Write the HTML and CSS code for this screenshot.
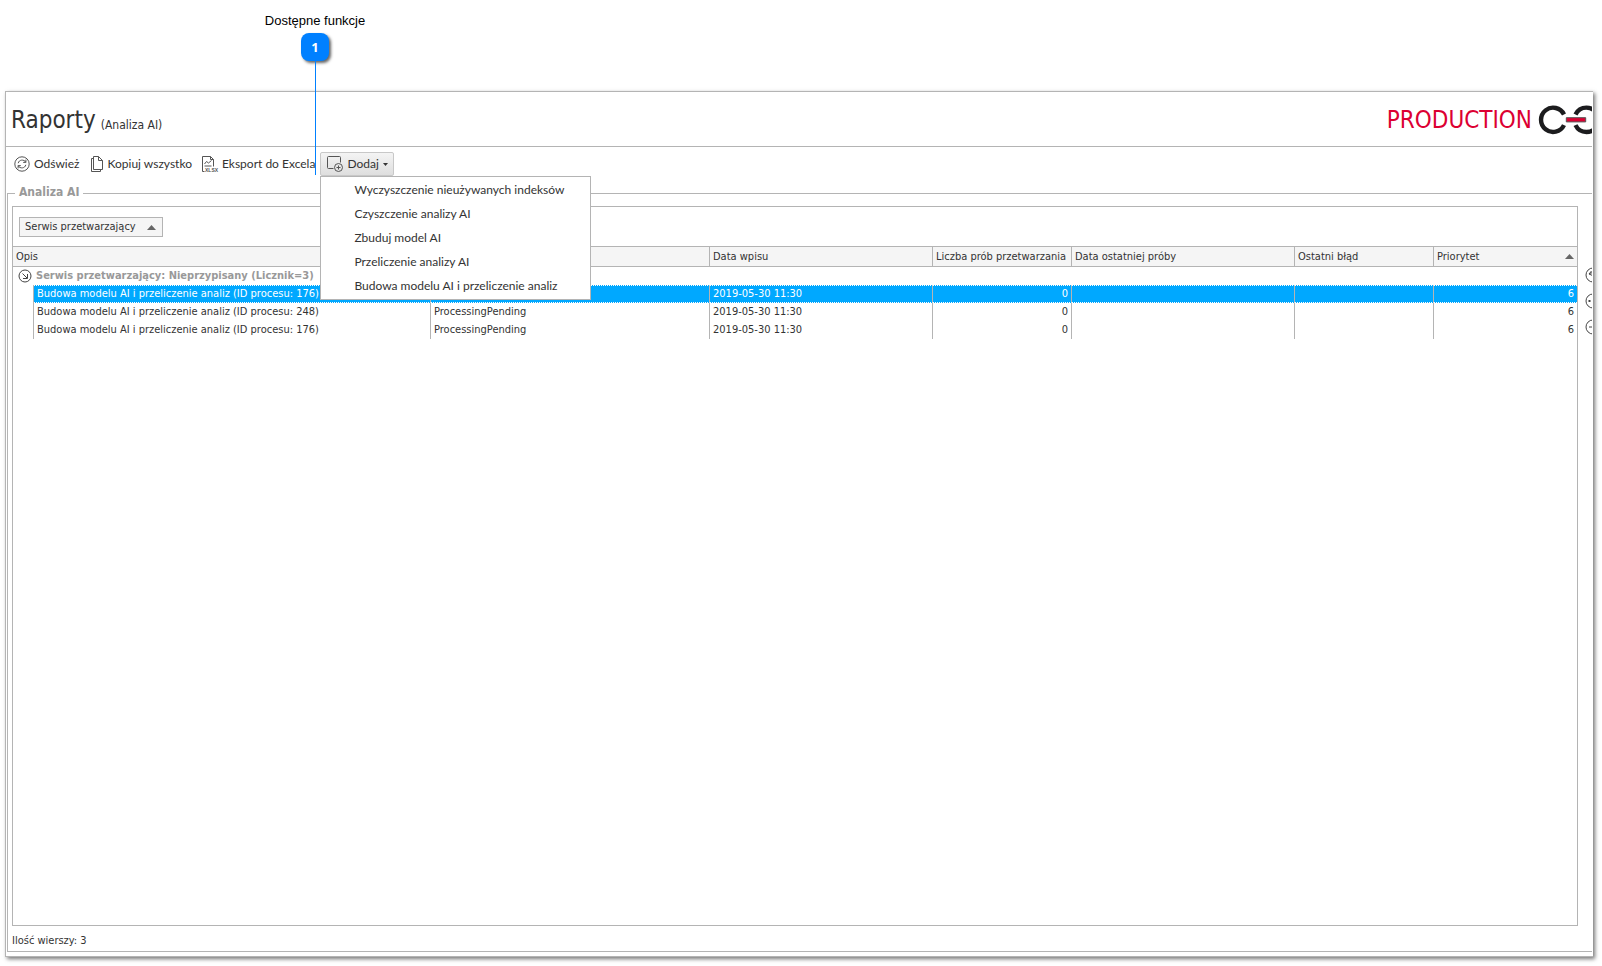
FILE: index.html
```
<!DOCTYPE html>
<html lang="pl">
<head>
<meta charset="utf-8">
<title>Raporty (Analiza AI)</title>
<link rel="stylesheet" href="styles.css">
</head>
<body>
<div class="callout">
  <span class="callout-label">Dostępne funkcje</span>
  <span class="callout-badge">1</span>
</div>
<main class="window">
  <header class="titlebar">
    <h1 class="title">Raporty</h1>
    <span class="subtitle">(Analiza AI)</span>
    <span class="env">PRODUCTION</span>
    <svg class="logo" viewBox="0 0 54 30" aria-hidden="true">
      <g fill="none" stroke="#1c1c1e" stroke-width="4.4">
        <path d="M26 9.500A12.100 12.100 0 1 0 26 20.100"/>
        <path d="M37.500 9.500A12.100 12.100 0 0 1 59.300 9.500M37.500 20.100A12.100 12.100 0 0 0 59.300 20.100"/>
      </g>
      <path d="M28.300 12.700H47.700V16.900H28.300z" fill="#dc0032"/>
    </svg>
  </header>
  <nav class="toolbar">
    <button class="tool" type="button">
      <svg class="icon" viewBox="0 0 16 16"><circle cx="8" cy="8" r="7.2"/><path d="M4.2 7.2C4.8 3.6 10 3 11.8 6.2M11.9 3.6V6.4H9.2M11.8 8.8C11.2 12.4 6 13 4.2 9.8M4.1 12.4V9.6H6.8"/></svg>
      Odśwież
    </button>
    <button class="tool" type="button">
      <svg class="icon icon-narrow" viewBox="0 0 14 16"><path d="M3.500.5H8.500L12.500 4.500V13.500H3.500zM8.500.5V4.500H12.500M3.500 2.500H1.500V15.500H10.500V13.500"/></svg>
      Kopiuj wszystko
    </button>
    <button class="tool" type="button">
      <svg class="icon" viewBox="0 0 16 16"><path d="M2.500 15.500H.5V.5H8.500L11.500 3.500V10.500M8.500.5V3.500H11.500M2.500 8L4.500 5.500L6.500 7L9.500 4.500M2.500 10H9.500"/><text class="icon-text" x="3" y="16">XLSX</text></svg>
      Eksport do Excela
    </button>
    <div class="dropdown">
      <button class="tool tool-open" type="button" aria-haspopup="true" aria-expanded="true">
        <svg class="icon" viewBox="0 0 16 16"><path d="M6.500 12.500H1.500Q.5 12.500.5 11.500V1.500Q.5.5 1.500.5H12.500Q13.500.5 13.500 1.500V6.500"/><circle cx="11.500" cy="11.500" r="4"/><path d="M9.500 11.500H13.500M11.500 9.500V13.500"/></svg>
        Dodaj
        <svg class="caret" viewBox="0 0 5 3"><path d="M0 0H5L2.500 3z"/></svg>
      </button>
      <div class="menu" role="menu">
        <button type="button" role="menuitem">Wyczyszczenie nieużywanych indeksów</button>
        <button type="button" role="menuitem">Czyszczenie analizy AI</button>
        <button type="button" role="menuitem">Zbuduj model AI</button>
        <button type="button" role="menuitem">Przeliczenie analizy AI</button>
        <button type="button" role="menuitem">Budowa modelu AI i przeliczenie analiz</button>
      </div>
    </div>
  </nav>
  <section class="group">
    <h2 class="legend">Analiza AI</h2>
    <div class="content">
      <div class="grid">
        <div class="groupby">
          <button class="chip" type="button">Serwis przetwarzający <svg class="sort" viewBox="0 0 9 5"><path d="M0 5H9L4.500 0z"/></svg></button>
        </div>
        <table>
          <colgroup><col class="c-indent"><col><col class="c-status"><col class="c-date"><col class="c-tries"><col class="c-last"><col class="c-error"><col class="c-prio"></colgroup>
          <thead>
            <tr><th colspan="2">Opis</th><th></th><th>Data wpisu</th><th>Liczba prób przetwarzania</th><th>Data ostatniej próby</th><th>Ostatni błąd</th><th><span class="sorted">Priorytet <svg class="sort" viewBox="0 0 9 5"><path d="M0 5H9L4.500 0z"/></svg></span></th></tr>
          </thead>
          <tbody>
            <tr class="group-row"><td colspan="8"><div class="group-cell"><svg class="ring" viewBox="0 0 14 14"><circle cx="7" cy="7" r="6"/><path d="M4.500 4.500L9 9M9.500 5V9.500H5"/></svg>Serwis przetwarzający: Nieprzypisany (Licznik=3)</div></td></tr>
            <tr class="selected"><td></td><td>Budowa modelu AI i przeliczenie analiz (ID procesu: 176)</td><td></td><td>2019-05-30 11:30</td><td class="num">0</td><td></td><td></td><td class="num">6</td></tr>
            <tr><td></td><td>Budowa modelu AI i przeliczenie analiz (ID procesu: 248)</td><td>ProcessingPending</td><td>2019-05-30 11:30</td><td class="num">0</td><td></td><td></td><td class="num">6</td></tr>
            <tr><td></td><td>Budowa modelu AI i przeliczenie analiz (ID procesu: 176)</td><td>ProcessingPending</td><td>2019-05-30 11:30</td><td class="num">0</td><td></td><td></td><td class="num">6</td></tr>
          </tbody>
        </table>
      </div>
      <div class="side">
        <button type="button" aria-label="Cofnij"><svg viewBox="0 0 16 16"><circle cx="8" cy="8" r="7"/><path d="M6.500 4L4 7L7.500 8.500M4 7Q8 4 11 8"/></svg></button>
        <button type="button" aria-label="Opcje"><svg viewBox="0 0 16 16"><circle cx="8" cy="8" r="7"/><path d="M3.500 8H5.500M7 8H9M10.500 8H12.500" stroke-width="2"/></svg></button>
        <button type="button" aria-label="Zwiń"><svg viewBox="0 0 16 16"><circle cx="8" cy="8" r="7"/><path d="M4 8H12"/></svg></button>
      </div>
    </div>
    <p class="count">Ilość wierszy: 3</p>
  </section>
</main>
</body>
</html>
```
FILE: styles.css
```
* { box-sizing: border-box; }
body {
  margin: 0;
  min-height: 100vh;
  padding: 0 9px 9px 5px;
  display: flex;
  flex-direction: column;
  background: #fff;
  color: #333;
  font: 11px/18px "DejaVu Sans Condensed", "DejaVu Sans", sans-serif;
}
button { font: inherit; color: inherit; background: none; border: 0; margin: 0; padding: 0; white-space: nowrap; }
svg { display: block; flex: none; fill: none; stroke: #555; }

.callout {
  width: 100px;
  margin-left: 260px;
  height: 91px;
  padding-top: 13px;
  display: flex;
  flex-direction: column;
  align-items: center;
  gap: 4px;
  color: #000;
  font: 13px/16px "Liberation Sans", Arial, sans-serif;
  white-space: nowrap;
}
.callout-badge {
  position: relative;
  width: 28px;
  height: 28px;
  border-radius: 8px;
  background: #0080ff;
  box-shadow: 2px 2px 3px #666;
  color: #fff;
  font: bold 13px/28px "Open Sans", sans-serif;
  text-align: center;
}
.callout-badge::after {
  content: "";
  position: absolute;
  z-index: 3;
  left: 14px;
  top: 28px;
  width: 1px;
  height: 114px;
  background: #0080ff;
}

.window {
  flex: 1;
  display: flex;
  flex-direction: column;
  padding-right: 1px;
  border: 1px solid #b4b4b4;
  border-right: 0;
  box-shadow: 2px 2px 4px 0 #777;
}
.titlebar {
  height: 55px;
  padding: 2px 0 0 5px;
  display: flex;
  align-items: center;
  overflow: hidden;
  border-bottom: 1px solid #b4b4b4;
}
.title { margin: 0; font: 24px/32px "DejaVu Sans Condensed", sans-serif; }
.subtitle { margin-left: 5px; padding-top: 9px; font-size: 12px; }
.env { margin-left: auto; color: #dc0032; font-size: 24px; }
.logo { width: 54px; height: 30px; margin-left: 6px; }

.toolbar { display: flex; align-items: flex-start; gap: 10px; height: 36px; padding: 5px 0 0 8px; font: 12px/18px Lato, sans-serif; }
.tool { display: flex; align-items: center; gap: 4px; height: 24px; }
.icon { width: 16px; height: 16px; overflow: visible; }
.icon-narrow { width: 14px; }
.icon-text { font: bold 5px "Liberation Sans", sans-serif; fill: #555; stroke: none; }
.caret { width: 5px; height: 3px; fill: #333; stroke: none; }
.dropdown { position: relative; margin-left: -5px; }
.tool-open { padding: 0 5px 0 6px; border: 1px solid #c8c8c8; border-radius: 2px; background: linear-gradient(#f4f4f4, #dedede); }
.menu {
  position: absolute;
  z-index: 2;
  top: 24px;
  left: 0;
  width: 271px;
  padding: 1px 0;
  display: flex;
  flex-direction: column;
  background: #fff;
  border: 1px solid #b4b4b4;
}
.menu button { height: 24px; padding-left: 33px; text-align: left; }

.group {
  flex: 1;
  display: flex;
  flex-direction: column;
  min-width: 0;
  margin: 10px 0 4px 1px;
  padding-left: 4px;
  border: 1px solid #b4b4b4;
  border-right: 0;
}
.legend { align-self: flex-start; margin: -11px 0 5px 3px; padding: 0 4px 0 4px; background: #fff; color: #999; font-weight: bold; line-height: 18px; font-size: 12px; }
.content { flex: 1; display: flex; }
.grid { flex: 1; min-width: 0; border: 1px solid #b4b4b4; }
.groupby { padding: 10px 6px 9px; }
.chip { display: flex; align-items: center; justify-content: space-between; width: 144px; height: 20px; padding: 0 6px 0 5px; border: 1px solid #b4b4b4; background: #f5f5f5; }
.sort { width: 9px; height: 5px; fill: #666; stroke: none; }

table { width: 100%; table-layout: fixed; border-collapse: separate; border-spacing: 0; }
.c-indent { width: 21px; }
.c-status { width: 279px; }
.c-date, .c-last { width: 223px; }
.c-tries, .c-error { width: 139px; }
.c-prio { width: 143px; }
th, td { height: 18px; padding: 0 3px; text-align: left; font-weight: normal; white-space: nowrap; overflow: hidden; border-right: 1px solid #b4b4b4; }
th { height: 21px; background: #f5f5f5; border-top: 1px solid #b4b4b4; border-bottom: 1px solid #b4b4b4; }
th:last-child, td:last-child { border-right: 0; }
.sorted { display: flex; align-items: center; justify-content: space-between; }
.group-cell { display: flex; align-items: center; gap: 4px; padding-left: 2px; color: #999; font-weight: bold; }
.ring { width: 14px; height: 14px; stroke: #444; }
.num { text-align: right; }
.selected td:not(:first-child) { background: #00a8ff; color: #fff; height: 18px; line-height: 16px; border-top: 1px dotted #fff; border-bottom: 1px dotted #fff; }

.side { width: 14px; padding: 61px 0 0 7px; overflow: hidden; display: flex; flex-direction: column; gap: 10px; }
.side button, .side svg { width: 16px; height: 16px; stroke: #444; }
.count { margin: 0; padding: 6px 0 1px; height: 25px; }
```
